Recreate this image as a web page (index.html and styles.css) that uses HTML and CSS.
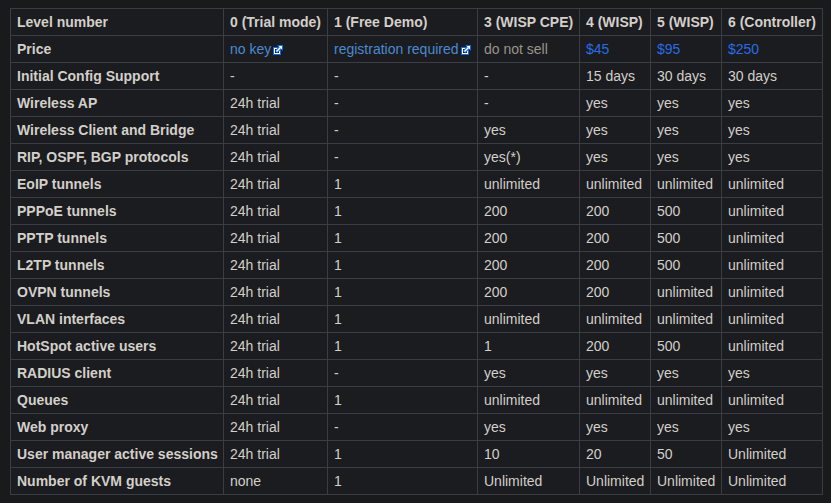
FILE: index.html
```html
<!DOCTYPE html>
<html lang="en">
<head>
<meta charset="utf-8">
<title>License levels</title>
<link rel="stylesheet" href="styles.css">
</head>
<body>
<table class="levels">
<colgroup><col class="c-name"><col class="c-trial"><col class="c-demo"><col class="c-cpe"><col class="c-wisp"><col class="c-wisp"><col class="c-ctrl"></colgroup>
<tbody>
<tr><th>Level number</th><th>0 (Trial mode)</th><th>1 (Free Demo)</th><th>3 (WISP CPE)</th><th>4 (WISP)</th><th>5 (WISP)</th><th>6 (Controller)</th></tr>
<tr><th>Price</th>
<td><a class="ext" href="#">no key<svg class="ext-icon" viewBox="0 0 10 10" width="10" height="10"><rect x="0" y="2" width="8" height="8" fill="#0b6bf0"/><rect x="1.500" y="3.500" width="5" height="5" fill="#1b1c1f" stroke="#fff"/><path d="M3 7L8 2" stroke="#0b6bf0" stroke-width="3.500"/><path d="M4 0h6v6z" fill="#0b6bf0"/><path d="M3.500 6.500L7.500 2.500" stroke="#fff" stroke-width="1.500"/><path d="M5.500 1H9v3.500z" fill="#fff"/></svg></a></td>
<td><a class="ext" href="#">registration required<svg class="ext-icon" viewBox="0 0 10 10" width="10" height="10"><rect x="0" y="2" width="8" height="8" fill="#0b6bf0"/><rect x="1.500" y="3.500" width="5" height="5" fill="#1b1c1f" stroke="#fff"/><path d="M3 7L8 2" stroke="#0b6bf0" stroke-width="3.500"/><path d="M4 0h6v6z" fill="#0b6bf0"/><path d="M3.500 6.500L7.500 2.500" stroke="#fff" stroke-width="1.500"/><path d="M5.500 1H9v3.500z" fill="#fff"/></svg></a></td>
<td class="muted">do not sell</td><td><a class="buy" href="#">$45</a></td><td><a class="buy" href="#">$95</a></td><td><a class="buy" href="#">$250</a></td></tr>
<tr><th>Initial Config Support</th><td>-</td><td>-</td><td>-</td><td>15 days</td><td>30 days</td><td>30 days</td></tr>
<tr><th>Wireless AP</th><td>24h trial</td><td>-</td><td>-</td><td>yes</td><td>yes</td><td>yes</td></tr>
<tr><th>Wireless Client and Bridge</th><td>24h trial</td><td>-</td><td>yes</td><td>yes</td><td>yes</td><td>yes</td></tr>
<tr><th>RIP, OSPF, BGP protocols</th><td>24h trial</td><td>-</td><td>yes(*)</td><td>yes</td><td>yes</td><td>yes</td></tr>
<tr><th>EoIP tunnels</th><td>24h trial</td><td>1</td><td>unlimited</td><td>unlimited</td><td>unlimited</td><td>unlimited</td></tr>
<tr><th>PPPoE tunnels</th><td>24h trial</td><td>1</td><td>200</td><td>200</td><td>500</td><td>unlimited</td></tr>
<tr><th>PPTP tunnels</th><td>24h trial</td><td>1</td><td>200</td><td>200</td><td>500</td><td>unlimited</td></tr>
<tr><th>L2TP tunnels</th><td>24h trial</td><td>1</td><td>200</td><td>200</td><td>500</td><td>unlimited</td></tr>
<tr><th>OVPN tunnels</th><td>24h trial</td><td>1</td><td>200</td><td>200</td><td>unlimited</td><td>unlimited</td></tr>
<tr><th>VLAN interfaces</th><td>24h trial</td><td>1</td><td>unlimited</td><td>unlimited</td><td>unlimited</td><td>unlimited</td></tr>
<tr><th>HotSpot active users</th><td>24h trial</td><td>1</td><td>1</td><td>200</td><td>500</td><td>unlimited</td></tr>
<tr><th>RADIUS client</th><td>24h trial</td><td>-</td><td>yes</td><td>yes</td><td>yes</td><td>yes</td></tr>
<tr><th>Queues</th><td>24h trial</td><td>1</td><td>unlimited</td><td>unlimited</td><td>unlimited</td><td>unlimited</td></tr>
<tr><th>Web proxy</th><td>24h trial</td><td>-</td><td>yes</td><td>yes</td><td>yes</td><td>yes</td></tr>
<tr><th>User manager active sessions</th><td>24h trial</td><td>1</td><td>10</td><td>20</td><td>50</td><td>Unlimited</td></tr>
<tr><th>Number of KVM guests</th><td>none</td><td>1</td><td>Unlimited</td><td>Unlimited</td><td>Unlimited</td><td>Unlimited</td></tr>
</tbody>
</table>
</body>
</html>
```
FILE: styles.css
```css
html, body { background: #181a1b; }
body {
  margin: 8px 0 0 10px;
  font-family: "Liberation Sans", Arial, sans-serif;
  font-size: 14px;
  line-height: 20px;
  color: #d3cfc9;
}
.levels {
  border-collapse: collapse;
  background: #1b1c1f;
  table-layout: fixed;
  width: 813px;
}
.c-name { width: 213px; }
.c-trial { width: 104px; }
.c-demo { width: 150px; }
.c-cpe { width: 102px; }
.c-wisp { width: 71px; }
.c-ctrl { width: 101px; }
.levels th, .levels td {
  border: 1px solid #3a3d42;
  padding: 3px 6px;
  text-align: left;
  white-space: nowrap;
}
.levels th { font-weight: 700; }
.levels td.muted { color: #9a948a; }
.ext { color: #4a8ad0; text-decoration: none; }
.ext-icon { margin-left: 2px; vertical-align: -1px; }
.buy { color: #2a6be6; text-decoration: none; }
```
